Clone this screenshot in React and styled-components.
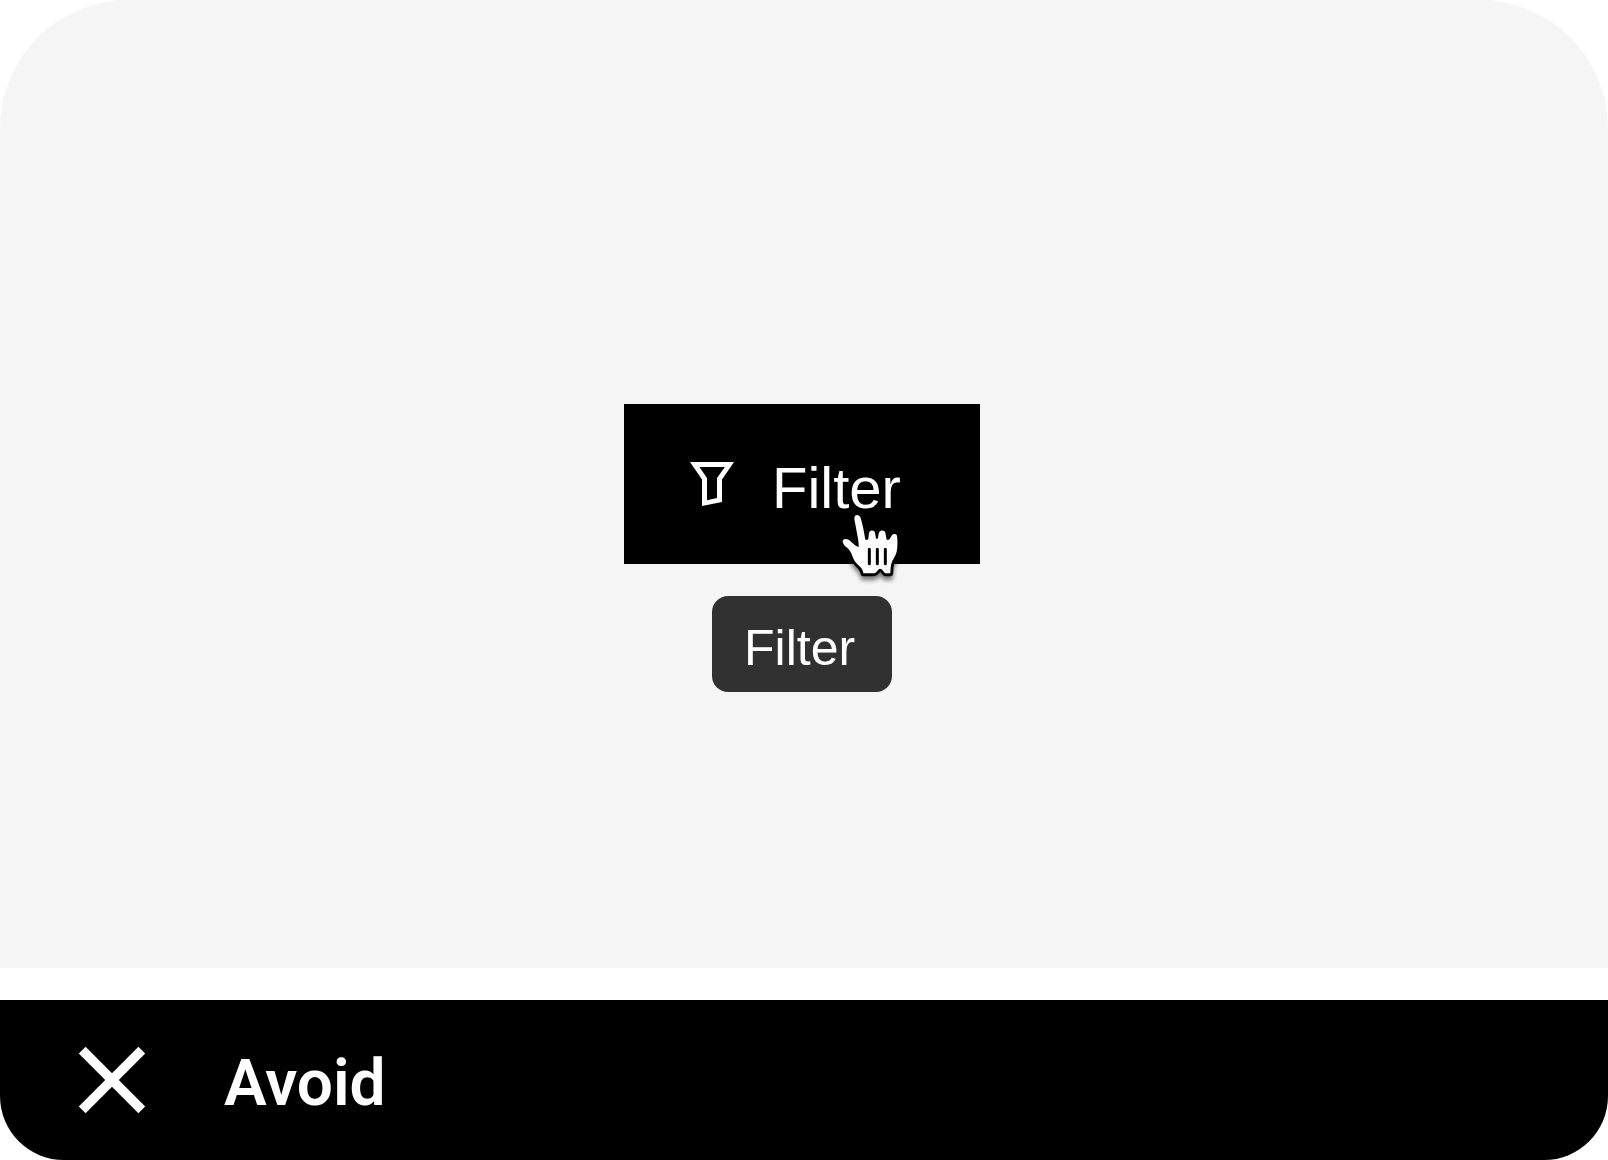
import React from 'react';
import styled, { createGlobalStyle } from 'styled-components';

const GlobalStyle = createGlobalStyle`
  *, *::before, *::after { box-sizing: border-box; }
  body {
    margin: 0;
    background: #fff;
    font-family: "Liberation Sans", Arial, sans-serif;
  }
`;

const Example = styled.figure`
  display: grid;
  grid-template-rows: 1fr auto;
  gap: 32px;
  min-height: 100vh;
  margin: 0;
`;

const Stage = styled.div`
  display: flex;
  align-items: center;
  justify-content: center;
  padding: 160px 4px 160px 0;
  border-radius: 128px 128px 0 0;
  background: #f5f5f5;
`;

const Anchor = styled.div`
  position: relative;
`;

const FilterButton = styled.button`
  display: flex;
  align-items: center;
  gap: 36px;
  min-width: 356px;
  min-height: 160px;
  padding: 0 64px;
  border: 0;
  background: #000;
  color: #fff;
  font: inherit;
  font-size: 58px;
  line-height: 64px;
  cursor: pointer;
`;

const Label = styled.span`
  padding-top: 8px;
`;

const Tooltip = styled.div`
  position: absolute;
  top: 100%;
  left: 50%;
  transform: translateX(-50%);
  min-width: 180px;
  margin-top: 32px;
  padding: 20px 32px 12px;
  border-radius: 16px;
  background: #313131;
  color: #fff;
  font-size: 50px;
  line-height: 64px;
`;

const Pointer = styled.svg`
  position: absolute;
  top: 108px;
  left: 216px;
  overflow: visible;
  pointer-events: none;
  filter: drop-shadow(0 4px 2px rgba(0, 0, 0, 0.5));
`;

const Verdict = styled.figcaption`
  display: flex;
  align-items: center;
  gap: 64px;
  min-height: 160px;
  padding: 0 64px;
  border-radius: 0 0 64px 64px;
  background: #000;
  color: #fff;
  font-family: Roboto, "Liberation Sans", sans-serif;
  font-size: 64px;
  font-weight: 600;
  line-height: 80px;
`;

function FunnelIcon() {
  return (
    <svg width="48" height="48" viewBox="0 0 48 48" aria-hidden="true">
      <path
        fill="currentColor"
        fillRule="evenodd"
        d="M2 2H46L34 19.5V42L14 46V19.5ZM11.4 7L19 18V40.2L29 38V18L36.9 7Z"
      />
    </svg>
  );
}

function CrossIcon() {
  return (
    <svg width="96" height="96" viewBox="0 0 96 96" aria-hidden="true">
      <path d="M18.2 18.2L77.8 77.8M77.8 18.2L18.2 77.8" stroke="currentColor" strokeWidth="9.6" />
    </svg>
  );
}

function HandPointer() {
  return (
    <Pointer width="66" height="74" viewBox="60 35 198 222" aria-hidden="true">
      <path
        d="M103 56C102 40 118 42 122 53C128 72 132 94 136 118H144C147 112 145 102 148 95C152 88 163 89 165 97L168 115H173C176 110 174 102 178 95C182 88 194 89 196 97L200 118H207C211 116 212 109 216 105C220 99 230 100 231 107C233 120 233 142 230 154C227 168 217 178 214 190C211 201 212 211 211 219H196C190 214 187 205 180 205C174 205 170 219 160 219H130C129 204 118 198 108 187C98 176 97 159 87 148C81 141 68 134 68 123C69 115 79 114 87 119C97 126 104 137 116 140C118 128 109 90 103 56Z"
        fill="#fff"
        stroke="#000"
        strokeWidth="17"
        strokeLinejoin="round"
        paintOrder="stroke"
      />
      <path d="M148 147V190M172 147V190M196 147V190" stroke="#000" strokeWidth="9" strokeLinecap="round" />
    </Pointer>
  );
}

export default function App() {
  return (
    <>
      <GlobalStyle />
      <Example>
        <Stage>
          <Anchor>
            <FilterButton type="button" aria-describedby="filter-tooltip">
              <FunnelIcon />
              <Label>Filter</Label>
            </FilterButton>
            <Tooltip id="filter-tooltip" role="tooltip">Filter</Tooltip>
            <HandPointer />
          </Anchor>
        </Stage>
        <Verdict>
          <CrossIcon />
          <Label>Avoid</Label>
        </Verdict>
      </Example>
    </>
  );
}
